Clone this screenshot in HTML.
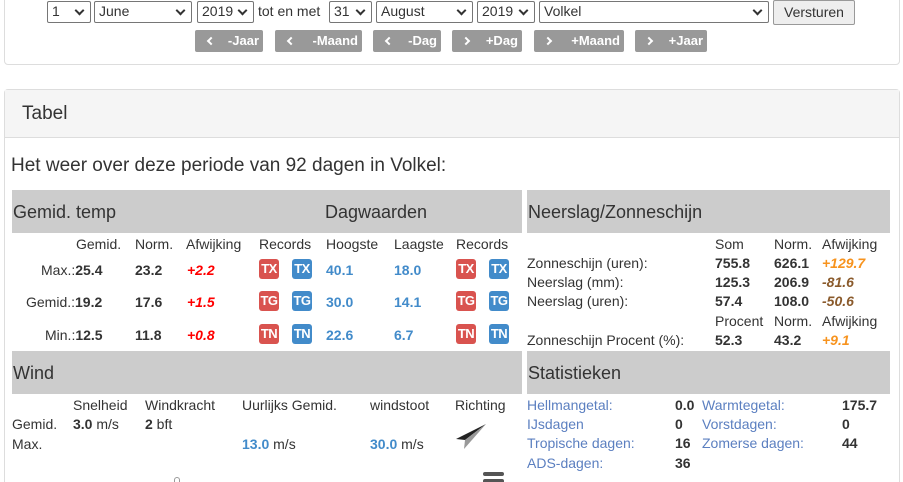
<!DOCTYPE html>
<html><head><meta charset="utf-8"><style>
*{box-sizing:border-box;margin:0;padding:0}
html{width:903px;height:482px;overflow:hidden}
body{width:903px;height:482px;overflow:hidden;background:#fff;font-family:"Liberation Sans",sans-serif;color:#333;position:relative}
.a{position:absolute;white-space:nowrap}
.n{font-family:"Liberation Sans Narrow","Liberation Sans",sans-serif}
.sel{position:absolute;top:1px;height:22px;border:1px solid #767676;background:#fff;font-size:14px;padding:1px 4px;border-radius:2px}
.sel:after{content:"";position:absolute;right:7px;top:5px;width:5px;height:5px;border-right:2px solid #333;border-bottom:2px solid #333;transform:rotate(45deg)}
.btn{position:absolute;top:30px;height:22px;background:#999;color:#fff;font-weight:bold;font-size:13px;border-radius:2px;line-height:22px}
.btn i{position:absolute;left:13px;top:8px;width:6px;height:6px;border-left:2px solid #fff;border-bottom:2px solid #fff;transform:rotate(45deg)}
.btn i.rt{transform:rotate(-135deg);left:11px}
.btn b{position:absolute;right:4px}
.bar{position:absolute;background:#ccc;height:43px;font-size:18px;line-height:44px;padding-left:1px;color:#333}
.t{font-size:14px}
.b{font-weight:bold}
.bd{position:absolute;width:20px;height:20px;border-radius:3px;color:#fff;font-weight:bold;font-size:13px;text-align:center;line-height:20px;letter-spacing:-0.5px}
.r{background:#d9534f}.bl{background:#428bca}
.blue{color:#428bca}
.lk{color:#5b7fc0}
</style></head><body>
<div class="a" style="left:4px;top:-5px;width:896px;height:70px;border:1px solid #ddd;border-radius:4px"></div>
<div class="sel n" style="left:47px;width:44px">1</div>
<div class="sel n" style="left:94px;width:98px">June</div>
<div class="sel n" style="left:197px;width:57px">2019</div>
<div class="a n t" style="left:258px;top:3px">tot en met</div>
<div class="sel n" style="left:329px;width:43px">31</div>
<div class="sel n" style="left:376px;width:97px">August</div>
<div class="sel n" style="left:477px;width:58px">2019</div>
<div class="sel n" style="left:539px;width:230px">Volkel</div>
<div class="a n t" style="left:773px;top:0;width:82px;height:25px;border:1px solid #999;background:#eee;border-radius:2px;text-align:center;line-height:23px">Versturen</div>
<div class="btn n" style="left:195px;width:68px"><i></i><b>-Jaar</b></div>
<div class="btn n" style="left:275px;width:87px"><i></i><b>-Maand</b></div>
<div class="btn n" style="left:373px;width:68px"><i></i><b>-Dag</b></div>
<div class="btn n" style="left:452px;width:70px"><i class="rt"></i><b>+Dag</b></div>
<div class="btn n" style="left:534px;width:90px"><i class="rt"></i><b>+Maand</b></div>
<div class="btn n" style="left:635px;width:72px"><i class="rt"></i><b>+Jaar</b></div>

<div class="a" style="left:4px;top:89px;width:896px;height:400px;border:1px solid #ddd;border-bottom:none;border-radius:4px 4px 0 0"></div>
<div class="a" style="left:5px;top:90px;width:894px;height:48px;background:#f5f5f5;border-bottom:1px solid #ddd"></div>
<div class="a" style="left:22px;top:103px;font-size:19px">Tabel</div>
<div class="a" style="left:11px;top:155px;font-size:19px">Het weer over deze periode van 92 dagen in Volkel:</div>

<div class="bar" style="left:12px;top:190px;width:510px">Gemid. temp<span style="position:absolute;left:313px">Dagwaarden</span></div>
<div class="bar" style="left:527px;top:190px;width:363px">Neerslag/Zonneschijn</div>
<div class="t">
<div class="a" style="left:76px;top:236px">Gemid.</div><div class="a" style="left:135px;top:236px">Norm.</div><div class="a" style="left:186px;top:236px">Afwijking</div><div class="a" style="left:259px;top:236px">Records</div><div class="a" style="left:326px;top:236px">Hoogste</div><div class="a" style="left:394px;top:236px">Laagste</div><div class="a" style="left:456px;top:236px">Records</div>
<div class="a" style="left:41px;top:262px">Max.:<b>25.4</b></div><div class="a b" style="left:135px;top:262px">23.2</div><div class="a b" style="left:187px;top:262px;color:#f00;font-style:italic">+2.2</div>
<div class="a" style="left:26px;top:294px">Gemid.:<b>19.2</b></div><div class="a b" style="left:135px;top:294px">17.6</div><div class="a b" style="left:187px;top:294px;color:#f00;font-style:italic">+1.5</div>
<div class="a" style="left:45px;top:327px">Min.:<b>12.5</b></div><div class="a b" style="left:135px;top:327px">11.8</div><div class="a b" style="left:187px;top:327px;color:#f00;font-style:italic">+0.8</div>
<div class="a b blue" style="left:326px;top:262px">40.1</div><div class="a b blue" style="left:394px;top:262px">18.0</div>
<div class="a b blue" style="left:326px;top:294px">30.0</div><div class="a b blue" style="left:394px;top:294px">14.1</div>
<div class="a b blue" style="left:326px;top:327px">22.6</div><div class="a b blue" style="left:394px;top:327px">6.7</div>
</div>
<div class="bd r" style="left:259px;top:259px">TX</div><div class="bd bl" style="left:292px;top:259px">TX</div><div class="bd r" style="left:456px;top:259px">TX</div><div class="bd bl" style="left:489px;top:259px">TX</div>
<div class="bd r" style="left:259px;top:291px">TG</div><div class="bd bl" style="left:292px;top:291px">TG</div><div class="bd r" style="left:456px;top:291px">TG</div><div class="bd bl" style="left:489px;top:291px">TG</div>
<div class="bd r" style="left:259px;top:324px">TN</div><div class="bd bl" style="left:292px;top:324px">TN</div><div class="bd r" style="left:456px;top:324px">TN</div><div class="bd bl" style="left:489px;top:324px">TN</div>

<div class="t">
<div class="a" style="left:715px;top:236px">Som</div><div class="a" style="left:774px;top:236px">Norm.</div><div class="a" style="left:822px;top:236px">Afwijking</div>
<div class="a" style="left:527px;top:255px">Zonneschijn (uren):</div><div class="a b" style="left:715px;top:255px">755.8</div><div class="a b" style="left:774px;top:255px">626.1</div><div class="a b" style="left:822px;top:255px;color:#f7931e;font-style:italic">+129.7</div>
<div class="a" style="left:527px;top:274px">Neerslag (mm):</div><div class="a b" style="left:715px;top:274px">125.3</div><div class="a b" style="left:774px;top:274px">206.9</div><div class="a b" style="left:822px;top:274px;color:#8a5a2b;font-style:italic">-81.6</div>
<div class="a" style="left:527px;top:293px">Neerslag (uren):</div><div class="a b" style="left:715px;top:293px">57.4</div><div class="a b" style="left:774px;top:293px">108.0</div><div class="a b" style="left:822px;top:293px;color:#8a5a2b;font-style:italic">-50.6</div>
<div class="a" style="left:715px;top:313px">Procent</div><div class="a" style="left:774px;top:313px">Norm.</div><div class="a" style="left:822px;top:313px">Afwijking</div>
<div class="a" style="left:527px;top:332px">Zonneschijn Procent (%):</div><div class="a b" style="left:715px;top:332px">52.3</div><div class="a b" style="left:774px;top:332px">43.2</div><div class="a b" style="left:822px;top:332px;color:#f7931e;font-style:italic">+9.1</div>
</div>

<div class="bar n" style="left:12px;top:351px;width:510px">Wind</div>
<div class="bar n" style="left:527px;top:351px;width:363px">Statistieken</div>
<div class="t n">
<div class="a" style="left:73px;top:397px">Snelheid</div><div class="a" style="left:145px;top:397px">Windkracht</div><div class="a" style="left:242px;top:397px">Uurlijks Gemid.</div><div class="a" style="left:370px;top:397px">windstoot</div><div class="a" style="left:455px;top:397px">Richting</div>
<div class="a" style="left:12px;top:416px">Gemid.</div><div class="a" style="left:73px;top:416px"><b>3.0</b> m/s</div><div class="a" style="left:145px;top:416px"><b>2</b> bft</div>
<div class="a" style="left:12px;top:436px">Max.</div><div class="a" style="left:242px;top:436px"><b class="blue">13.0</b> m/s</div><div class="a" style="left:370px;top:436px"><b class="blue">30.0</b> m/s</div>
<div class="a lk" style="left:527px;top:397px">Hellmangetal:</div><div class="a b" style="left:675px;top:397px">0.0</div><div class="a lk" style="left:702px;top:397px">Warmtegetal:</div><div class="a b" style="left:842px;top:397px">175.7</div>
<div class="a lk" style="left:527px;top:416px">IJsdagen</div><div class="a b" style="left:675px;top:416px">0</div><div class="a lk" style="left:702px;top:416px">Vorstdagen:</div><div class="a b" style="left:842px;top:416px">0</div>
<div class="a lk" style="left:527px;top:435px">Tropische dagen:</div><div class="a b" style="left:675px;top:435px">16</div><div class="a lk" style="left:702px;top:435px">Zomerse dagen:</div><div class="a b" style="left:842px;top:435px">44</div>
<div class="a lk" style="left:527px;top:455px">ADS-dagen:</div><div class="a b" style="left:675px;top:455px">36</div>
</div>
<svg class="a" style="left:454px;top:422px" width="34" height="28"><polygon points="32,2 2,17 11,18" fill="#222"/><polygon points="32,2 11,18 10,27" fill="#999"/></svg>
<div class="a" style="left:483px;top:472px;width:21px;height:4px;background:#555;border-radius:2px"></div>
<div class="a" style="left:483px;top:479px;width:21px;height:3px;background:#555;border-radius:2px 2px 0 0"></div>
<div class="a" style="left:174px;top:477px;width:6px;height:5px;border:1px solid #999;border-bottom:none;border-radius:3px 3px 0 0"></div>
</body></html>
